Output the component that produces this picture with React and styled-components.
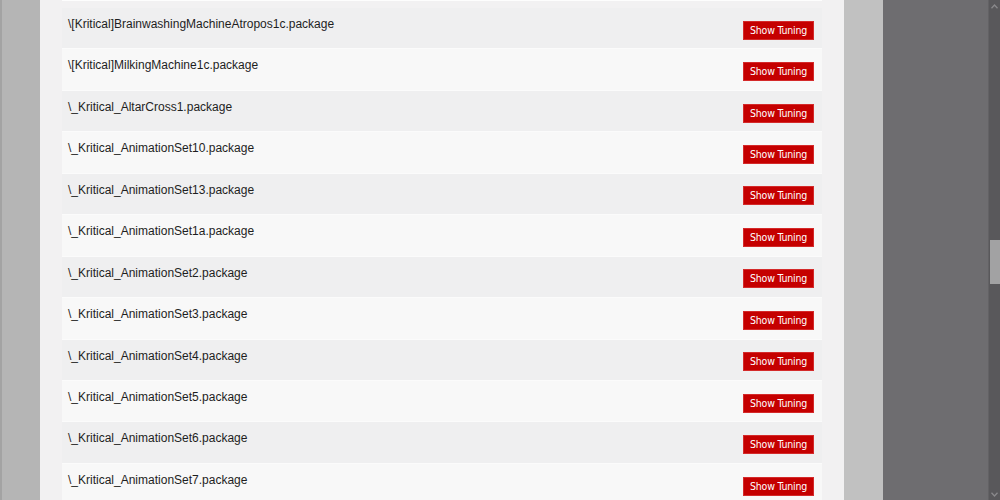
import styled, { createGlobalStyle } from 'styled-components';

const GlobalStyle = createGlobalStyle`
  html, body {
    margin: 0;
    padding: 0;
    height: 500px;
    overflow: hidden;
  }
  #root {
    height: 500px;
  }
`;

const files = [
  '\\[Kritical]BrainwashingMachineAtropos1c.package',
  '\\[Kritical]MilkingMachine1c.package',
  '\\_Kritical_AltarCross1.package',
  '\\_Kritical_AnimationSet10.package',
  '\\_Kritical_AnimationSet13.package',
  '\\_Kritical_AnimationSet1a.package',
  '\\_Kritical_AnimationSet2.package',
  '\\_Kritical_AnimationSet3.package',
  '\\_Kritical_AnimationSet4.package',
  '\\_Kritical_AnimationSet5.package',
  '\\_Kritical_AnimationSet6.package',
  '\\_Kritical_AnimationSet7.package',
];

const App = () => {
  return (
    <>
      <GlobalStyle/>
      <Screen>
        <LeftGutter/>
        <Panel>
          <TopEdge/>
          <List>
            {files.map((name, index) => (
              <Row key={name} $odd={index % 2 === 1}>
                <FileName>{name}</FileName>
                <TuningButton>Show Tuning</TuningButton>
              </Row>
            ))}
          </List>
        </Panel>
        <RightGutter/>
        <Backdrop/>
        <Scrollbar>
          <Arrow>
            <svg width="7" height="5" viewBox="0 0 7 5"><path d="M0.5 4.2 L3.5 1 L6.5 4.2" fill="none" stroke="#8a898c" strokeWidth="1.3"/></svg>
          </Arrow>
          <Track>
            <Thumb/>
          </Track>
          <Arrow>
            <svg width="7" height="5" viewBox="0 0 7 5"><path d="M0.5 0.8 L3.5 4 L6.5 0.8" fill="none" stroke="#8a898c" strokeWidth="1.3"/></svg>
          </Arrow>
        </Scrollbar>
      </Screen>
    </>
  )
}

const Screen = styled.div`
  display: flex;
  width: 1000px;
  height: 500px;
  overflow: hidden;
`;

const LeftGutter = styled.div`
  width: 38px;
  flex: none;
  background: #b5b5b5;
  border-left: 2px solid #a3a3a3;
`;

const Panel = styled.div`
  width: 804px;
  flex: none;
  background: #f2f1f2;
  display: flex;
  flex-direction: column;
`;

const TopEdge = styled.div`
  height: 2px;
  margin: 0 22px 0 22px;
  background: #f8f8f8;
  border-bottom: 1px solid #fdfdfd;
  margin-bottom: 7px;
`;

const List = styled.div`
  margin: 0 22px;
  display: flex;
  flex-direction: column;
`;

const Row = styled.div`
  height: 40.45px;
  flex: none;
  display: flex;
  justify-content: space-between;
  align-items: flex-start;
  padding: 0 8px 0 6px;
  background: ${p => p.$odd ? '#f8f8f8' : '#efeff0'};
  border-bottom: 1px solid #fbfbfb;
`;

const FileName = styled.div`
  font-family: "Liberation Sans", Arial, sans-serif;
  font-size: 12px;
  color: #1e1e1e;
  padding-top: 8px;
  line-height: 16px;
`;

const TuningButton = styled.button`
  align-self: center;
  margin-top: 4px;
  width: 71px;
  height: 19px;
  padding: 0;
  border: 1px solid #d42a2a;
  background: #c50000;
  color: #fff;
  font-family: "DejaVu Sans Condensed", "DejaVu Sans", sans-serif;
  font-size: 10.5px;
  letter-spacing: -0.2px;
  line-height: 17px;
  cursor: pointer;
`;

const RightGutter = styled.div`
  width: 39px;
  flex: none;
  background: #c1c1c1;
`;

const Backdrop = styled.div`
  flex: 1;
  background: #6e6d70;
  border-right: 1px solid #636265;
`;

const Scrollbar = styled.div`
  width: 11px;
  flex: none;
  background: #59585b;
  display: flex;
  flex-direction: column;
`;

const Arrow = styled.div`
  height: 12px;
  display: flex;
  align-items: center;
  justify-content: center;
`;

const Track = styled.div`
  flex: 1;
  padding-top: 228px;
`;

const Thumb = styled.div`
  height: 44px;
  margin-left: 1px;
  background: #a2a2a3;
`;

export default App;
